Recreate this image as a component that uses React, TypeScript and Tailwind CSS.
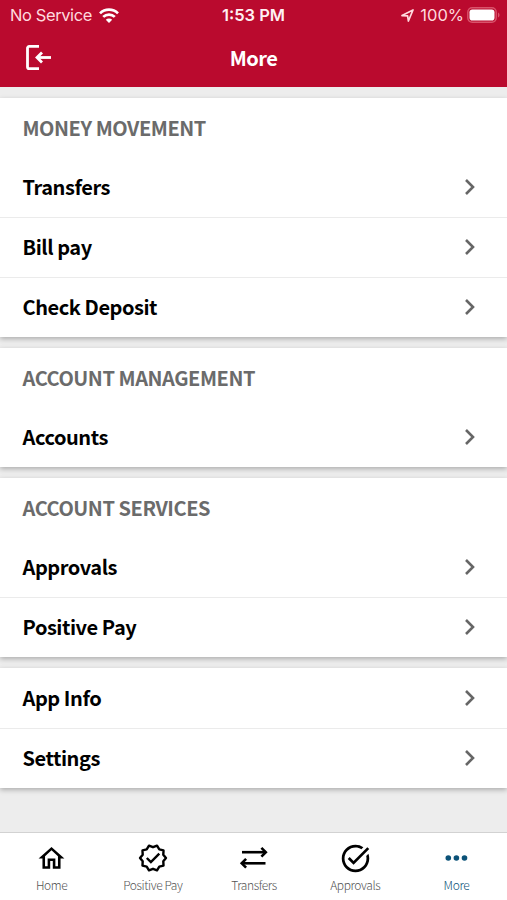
import type { ReactNode } from "react";
import { MdOutlineHome, MdTaskAlt } from "react-icons/md";

type Group = { title?: string; items: string[] };

const groups: Group[] = [
  { title: "MONEY MOVEMENT", items: ["Transfers", "Bill pay", "Check Deposit"] },
  { title: "ACCOUNT MANAGEMENT", items: ["Accounts"] },
  { title: "ACCOUNT SERVICES", items: ["Approvals", "Positive Pay"] },
  { items: ["App Info", "Settings"] },
];

function Chevron() {
  return (
    <svg className="h-5 w-3" viewBox="0 0 12 20" fill="none" stroke="#666" strokeWidth="2.6">
      <path d="M2 3l7 7-7 7" />
    </svg>
  );
}

function StatusBar() {
  return (
    <div className="grid h-[30px] grid-cols-3 items-center font-['Inter',sans-serif] text-[16.5px] text-[#ffd9de]">
      <div className="flex items-center gap-[7px] pl-[10px]">
        <span className="whitespace-nowrap tracking-[-0.4px]">No Service</span>
        <svg className="h-[15px] w-5" viewBox="0 0 20 15" fill="none" stroke="white" strokeWidth="2.7">
          <path d="M1 5.4a12.8 12.8 0 0 1 18 0" />
          <path d="M4.2 8.9a8.3 8.3 0 0 1 11.6 0" />
          <path d="M10 15l-3.2-3.3a4.6 4.6 0 0 1 6.4 0z" fill="white" stroke="none" />
        </svg>
      </div>
      <div className="text-center font-semibold text-[#fff0f2]">1:53 PM</div>
      <div className="flex items-center justify-end pr-[7px]">
        <svg className="mr-[6px] h-[13px] w-[13px]" viewBox="0 0 13 13" fill="none" stroke="#ffd9de" strokeWidth="1.7" strokeLinejoin="round">
          <path d="M1 6.6L12 1 7.4 12 6.6 6.9z" />
        </svg>
        <span>100%</span>
        <svg className="ml-[3px] h-4 w-[33px]" viewBox="0 0 33 16">
          <rect x="0.8" y="0.8" width="28.4" height="14.4" rx="4.4" fill="none" stroke="#d9536b" strokeWidth="1.4" />
          <rect x="2.5" y="2.5" width="25" height="11" rx="2.8" fill="white" />
          <path d="M31 5.5c2 .7 2 4.3 0 5z" fill="#d9536b" />
        </svg>
      </div>
    </div>
  );
}

function ExitIcon() {
  return (
    <svg className="h-[26px] w-[26px]" viewBox="0 0 26 26" fill="none" stroke="white" strokeWidth="2.8">
      <path d="M13 1.4H3.2a1.7 1.7 0 0 0-1.7 1.7v18.8a1.7 1.7 0 0 0 1.7 1.7H13" />
      <path d="M25 12.5H11.5" />
      <path d="M16 7.5l-5 5 5 5" />
    </svg>
  );
}

function BadgeIcon() {
  return (
    <svg className="h-[30px] w-[30px]" viewBox="0 0 30 30" fill="none" stroke="black" strokeWidth="2.4">
      <path
        strokeLinejoin="round"
        d="M28 15L25.3 18.3 25.52 22.64 21.3 23.7 19.02 27.36 15 25.8 10.98 27.36 8.7 23.7 4.48 22.64 4.7 18.3 2 15 4.7 11.7 4.48 7.36 8.7 6.3 10.98 2.64 15 4.2 19.02 2.64 21.3 6.3 25.52 7.36 25.3 11.7z"
      />
      <path d="M8.8 15l4.1 4.1 8.4-8.4" />
    </svg>
  );
}

function SwapIcon() {
  return (
    <svg className="h-[30px] w-[30px]" viewBox="0 0 30 30" fill="none" stroke="black" strokeWidth="2.6">
      <path d="M3 9.2h23.5" />
      <path d="M22.4 4.8l4.4 4.4-4.4 4.4" />
      <path d="M26.5 20.3H3" />
      <path d="M7.1 15.9l-4.400 4.400 4.400 4.400" />
    </svg>
  );
}

function DotsIcon() {
  return (
    <svg className="h-[30px] w-[30px]" viewBox="0 0 30 30" fill="#0b5278">
      <circle cx="7.300" cy="15" r="2.8" />
      <circle cx="15.400" cy="15" r="2.8" />
      <circle cx="23.500" cy="15" r="2.8" />
    </svg>
  );
}

function Tab({ icon, label, color }: { icon: ReactNode; label: string; color: string }) {
  return (
    <div className={`flex flex-1 flex-col items-center pt-[10px] ${color}`}>
      <div className="flex h-[30px] items-center">{icon}</div>
      <span className="mt-[2.5px] whitespace-nowrap text-[12px] font-light leading-[18px] tracking-[-0.4px]">{label}</span>
    </div>
  );
}

export default function App() {
  return (
    <div className="flex h-[900px] w-[507px] flex-col overflow-hidden bg-[#ededed] font-['Noto_Sans_CJK_SC',sans-serif] [font-feature-settings:'liga']">
      <header className="h-[87px] shrink-0 bg-[#ba0a2e]">
        <StatusBar />
        <div className="grid h-[56px] grid-cols-3 items-center">
          <div className="pl-[26px]">
            <ExitIcon />
          </div>
          <h1 className="text-center text-[20px] font-bold leading-[28px] tracking-[-0.5px] text-white">More</h1>
        </div>
      </header>
      <main className="flex flex-1 flex-col gap-[11px] pt-[11px]">
        {groups.map((group) => (
          <section key={group.items[0]} className="bg-white shadow-[0_2px_5px_rgba(0,0,0,0.27)]">
            {group.title && (
              <h2 className="flex h-[59px] items-center pl-[22.5px] text-[20px] font-bold tracking-[-0.45px] text-[#6b6b6b]">
                {group.title}
              </h2>
            )}
            {group.items.map((item, i) => (
              <div
                key={item}
                className={`flex h-[60px] items-center justify-between pl-[22.5px] pr-[31px] ${i > 0 ? "border-t border-[#ebebeb] pb-[2px]" : ""}`}
              >
                <span className="text-[20px] font-bold tracking-[-0.44px] text-black">{item}</span>
                <Chevron />
              </div>
            ))}
          </section>
        ))}
      </main>
      <nav className="flex h-[68px] shrink-0 border-t border-[#d2d2d2] bg-white pl-px">
        <Tab icon={<MdOutlineHome size={31} color="black" />} label="Home" color="text-[#555]" />
        <Tab icon={<BadgeIcon />} label="Positive Pay" color="text-[#555]" />
        <Tab icon={<SwapIcon />} label="Transfers" color="text-[#555]" />
        <Tab icon={<MdTaskAlt size={33} color="black" />} label="Approvals" color="text-[#555]" />
        <Tab icon={<DotsIcon />} label="More" color="text-[#0b5278]" />
      </nav>
    </div>
  );
}
